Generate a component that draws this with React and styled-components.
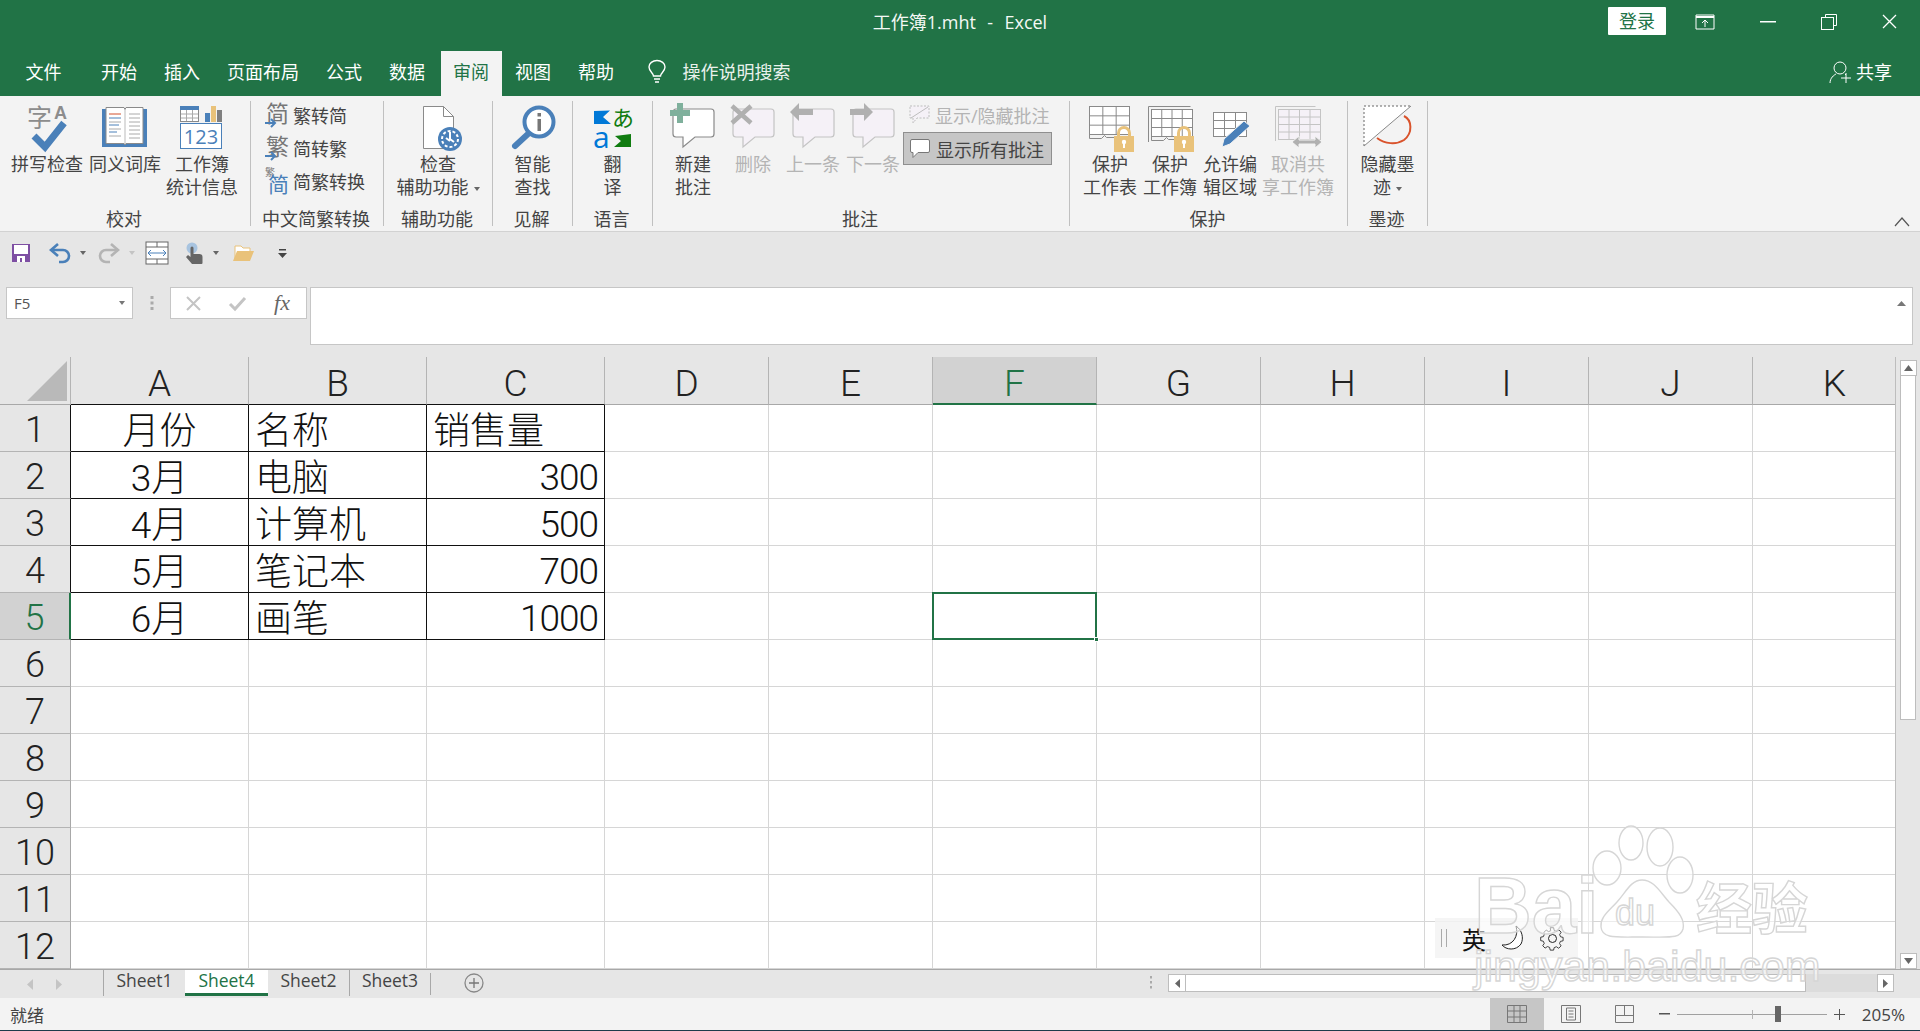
import React from 'react';
import styled, { createGlobalStyle } from 'styled-components';

const UI = '"Open Sans", "Noto Sans CJK SC", sans-serif';
const GREEN = '#217346';
const BLUE = '#4a80b9';

const Global = createGlobalStyle`
  html, body { margin: 0; height: 100%; overflow: hidden; background: #fff; }
  #root { height: 100%; }
  svg { display: block; flex: none; overflow: visible; }
`;

const Page = styled.div`
  position: relative;
  width: 1920px;
  height: 1031px;
  overflow: hidden;
  display: flex;
  flex-direction: column;
  font-family: ${UI};
  font-size: 18px;
  color: #444;
`;

/* title + tabs */
const TitleBar = styled.div`
  height: 51px;
  background: ${GREEN};
  display: grid;
  grid-template-columns: 1fr auto 1fr;
  color: #fff;
`;
const TitleText = styled.div`
  grid-column: 2;
  white-space: pre;
  line-height: 44px;
  font-size: 18px;
  word-spacing: 1px;
  color: #f4f8f5;
`;
const WinButtons = styled.div`
  display: flex;
  justify-content: flex-end;
  align-items: flex-start;
`;
const Login = styled.div`
  width: 58px;
  height: 28px;
  margin: 7px 10px 0 0;
  background: #fff;
  border-radius: 1px;
  color: ${GREEN};
  text-align: center;
  line-height: 28px;
`;
const WinBtn = styled.div`
  width: 61px;
  height: 43px;
  display: flex;
  align-items: center;
  justify-content: center;
`;
const TabRow = styled.div`
  height: 45px;
  background: ${GREEN};
  display: flex;
  color: #fff;
  line-height: 42px;
`;
const Tab = styled.div`
  padding: 0 13.5px;
  white-space: nowrap;
`;
const FileTab = styled(Tab)`
  padding: 0 26px 0 25.5px;
`;
const ActiveTab = styled(Tab)`
  margin-left: 2px;
  padding: 0 12.5px;
  background: #f3f3f3;
  color: ${GREEN};
  line-height: 42px;
`;
const Search = styled.div`
  display: flex;
  align-items: center;
  gap: 17px;
  margin-left: 20px;
  height: 42px;
  color: #e9f1ec;
`;
const Share = styled.div`
  margin-left: auto;
  margin-right: 28px;
  display: flex;
  align-items: center;
  gap: 4px;
  height: 42px;
`;

/* ribbon */
const Ribbon = styled.div`
  position: relative;
  height: 136px;
  box-sizing: border-box;
  padding-top: 5px;
  background: #f3f3f3;
  border-bottom: 1px solid #d2d2d2;
  display: flex;
`;
const Group = styled.section`
  width: ${p => p.$w}px;
  box-sizing: border-box;
  height: 125px;
  border-right: 1px solid #c0c0c0;
  display: flex;
  flex-direction: column;
`;
const GroupBody = styled.div`
  flex: 1;
  display: flex;
  justify-content: ${p => (p.$start ? 'flex-start' : 'center')};
  padding-left: ${p => p.$pad || 0}px;
`;
const GroupLabel = styled.div`
  height: 14px;
  line-height: 14px;
  padding-right: 2px;
  text-align: center;
  white-space: nowrap;
`;
const BigBtn = styled.div`
  width: ${p => p.$w || 60}px;
  flex: none;
  display: flex;
  flex-direction: column;
  align-items: center;
  color: ${p => (p.$off ? '#b4b4b4' : '#444')};
`;
const BigText = styled.div`
  line-height: 23px;
  text-align: center;
  white-space: nowrap;
  margin-top: 1px;
`;
const Caret = styled.span`
  display: inline-block;
  width: 0;
  height: 0;
  margin-left: ${p => p.$ml ?? 5}px;
  vertical-align: middle;
  border-left: 3.5px solid transparent;
  border-right: 3.5px solid transparent;
  border-top: 4px solid ${p => p.$c || '#666'};
`;
const SmallCol = styled.div`
  display: flex;
  flex-direction: column;
  padding-left: ${p => p.$pad || 0}px;
  margin-top: -3px;
  flex: none;
`;
const SmallRow = styled.div`
  height: 33px;
  display: flex;
  align-items: center;
  gap: 4px;
  padding-left: ${p => p.$pl || 0}px;
  white-space: nowrap;
  color: ${p => (p.$off ? '#b4b4b4' : '#444')};
`;
const ShowAll = styled(SmallRow)`
  width: 149px;
  box-sizing: border-box;
  padding-left: 5px;
  gap: 5px;
  margin-top: 1px;
  background: #c6c6c6;
  border: 1px solid #8f8f8f;
`;
const Collapse = styled.div`
  position: absolute;
  right: 10px;
  bottom: 4px;
`;

/* quick access */
const Qat = styled.div`
  height: 55px;
  background: #e6e6e6;
  box-sizing: border-box;
  padding: 9px 0 0 11px;
  display: flex;
  align-items: flex-start;
`;
const QatItem = styled.div`
  margin-left: ${p => p.$ml || 0}px;
  height: 24px;
  display: flex;
  align-items: center;
`;

/* formula bar */
const FormulaRow = styled.div`
  height: 70px;
  background: #e6e6e6;
  display: flex;
  align-items: flex-start;
  padding-left: 6px;
`;
const NameBox = styled.div`
  width: 127px;
  height: 32px;
  box-sizing: border-box;
  background: #fff;
  border: 1px solid #c6c6c6;
  display: flex;
  align-items: center;
  justify-content: space-between;
  padding: 0 7px 0 7px;
  font-size: 15px;
  color: #555;
`;
const Dots = styled.div`
  width: 37px;
  height: 32px;
  display: flex;
  align-items: center;
  justify-content: center;
`;
const FxBox = styled.div`
  width: 137px;
  height: 32px;
  box-sizing: border-box;
  background: #fff;
  border: 1px solid #c6c6c6;
  display: flex;
  align-items: center;
  justify-content: space-between;
  padding: 0 16px 0 15px;
`;
const FxGlyph = styled.span`
  font-family: "Liberation Serif", serif;
  font-style: italic;
  font-size: 22px;
  line-height: 26px;
  color: #666;
`;
const FormulaInput = styled.div`
  flex: 1;
  height: 58px;
  box-sizing: border-box;
  margin: 0 7px 0 3px;
  background: #fff;
  border: 1px solid #c6c6c6;
  display: flex;
  justify-content: flex-end;
  padding: 13px 6px 0 0;
`;

/* sheet */
const SheetArea = styled.div`
  height: 612px;
  display: flex;
  background: #e6e6e6;
`;
const Grid = styled.div`
  width: 1895px;
  flex: none;
  overflow: hidden;
  display: grid;
  grid-template-columns: 71px repeat(3, 178px) repeat(8, 164px);
  grid-template-rows: 48px repeat(12, 47px);
  background: #fff;
  font-family: Roboto, "Noto Sans CJK SC", sans-serif;
  font-weight: 300;
  font-size: 37px;
  color: #111;
`;
const Corner = styled.div`
  position: relative;
  background: #e6e6e6;
  border-right: 1px solid #b4b4b4;
  border-bottom: 1px solid #a8a8a8;
  box-sizing: border-box;
  &::after {
    content: '';
    position: absolute;
    right: 3px;
    bottom: 3px;
    width: 40px;
    height: 40px;
    background: #b9b9b9;
    clip-path: polygon(100% 0, 100% 100%, 0 100%);
  }
`;
const ColHead = styled.div`
  box-sizing: border-box;
  background: ${p => (p.$sel ? '#d2d2d2' : '#e6e6e6')};
  color: ${p => (p.$sel ? GREEN : '#222')};
  border-right: 1px solid #b4b4b4;
  border-bottom: ${p => (p.$sel ? `2px solid ${GREEN}` : p.$ruled ? '1px solid #111' : '1px solid #a8a8a8')};
  text-align: center;
  line-height: 54px;
`;
const RowHead = styled.div`
  box-sizing: border-box;
  background: ${p => (p.$sel ? '#d2d2d2' : '#e6e6e6')};
  color: ${p => (p.$sel ? GREEN : '#222')};
  border-right: ${p => (p.$sel ? `2px solid ${GREEN}` : p.$ruled ? '1px solid #111' : '1px solid #a8a8a8')};
  border-bottom: 1px solid #b4b4b4;
  text-align: center;
  font-size: 36px;
  line-height: 51px;
  overflow: hidden;
`;
const Cell = styled.div`
  position: relative;
  box-sizing: border-box;
  border-right: 1px solid ${p => (p.$ruled ? '#111' : '#d6d6d6')};
  border-bottom: 1px solid ${p => (p.$ruled ? '#111' : '#d6d6d6')};
  padding: 0 6px;
  text-align: ${p => p.$align || 'left'};
  line-height: ${p => (p.$num ? 51 : 53)}px;
  white-space: nowrap;
  letter-spacing: ${p => (p.$num ? '-1px' : 0)};
  ${p => p.$active && `
    &::after {
      content: '';
      position: absolute;
      left: -1px;
      top: -1px;
      right: -1px;
      bottom: -1px;
      border: 2px solid ${GREEN};
    }
    &::before {
      content: '';
      position: absolute;
      z-index: 1;
      right: -3px;
      bottom: -3px;
      width: 5px;
      height: 5px;
      background: ${GREEN};
      border: 1px solid #fff;
      box-sizing: border-box;
    }
  `}
`;
const VScroll = styled.div`
  width: 25px;
  box-sizing: border-box;
  padding: 3px 4px 0;
  border-left: 1px solid #bdbdbd;
  display: flex;
  flex-direction: column;
`;
const ScrollBtn = styled.div`
  box-sizing: border-box;
  width: ${p => p.$w || 17}px;
  height: ${p => p.$h || 16}px;
  flex: none;
  background: #fff;
  border: 1px solid #bdbdbd;
  display: flex;
  align-items: center;
  justify-content: center;
`;
const VThumb = styled.div`
  height: 344px;
  background: #fff;
  border: 1px solid #bdbdbd;
  border-top: 0;
  box-sizing: border-box;
`;
const Spring = styled.div`
  flex: 1;
`;

/* tabs + status */
const TabBar = styled.div`
  height: 29px;
  box-sizing: border-box;
  background: #e6e6e6;
  border-top: 1px solid #a8a8a8;
  display: flex;
  align-items: flex-start;
`;
const SheetNav = styled.div`
  width: 103px;
  height: 28px;
  display: flex;
  align-items: center;
  padding-left: 27px;
  gap: 23px;
  box-sizing: border-box;
`;
const SheetTab = styled.div`
  width: ${p => p.$w}px;
  height: 26px;
  box-sizing: border-box;
  text-align: center;
  font-size: 17.5px;
  line-height: 20px;
  background: ${p => (p.$on ? '#fff' : 'transparent')};
  color: ${p => (p.$on ? GREEN : '#444')};
  border-bottom: ${p => (p.$on ? `3px solid ${GREEN}` : '0')};
  border-left: ${p => (p.$sep ? '1px solid #a8a8a8' : '0')};
  background-clip: padding-box;
`;
const TabEnd = styled.div`
  width: 1px;
  height: 22px;
  margin-top: 3px;
  background: #a8a8a8;
`;
const AddSheet = styled.div`
  margin: 3px 0 0 33px;
`;
const HScroll = styled.div`
  margin-left: auto;
  margin-right: 26px;
  padding-top: 4px;
  display: flex;
  align-items: flex-start;
`;
const HThumb = styled.div`
  width: 620px;
  height: 18px;
  box-sizing: border-box;
  background: #fff;
  border: 1px solid #bdbdbd;
  border-left: 0;
`;
const HTrack = styled.div`
  width: 71px;
  height: 18px;
  background: #dcdcdc;
`;
const Splitter = styled.div`
  margin-right: 15px;
  height: 18px;
  display: flex;
  align-items: center;
`;
const StatusBar = styled.div`
  height: 33px;
  box-sizing: border-box;
  background: #f3f3f3;
  border-bottom: 1px solid #1d3c4a;
  display: flex;
  align-items: center;
  padding-left: 10px;
  font-size: 17px;
  color: #444;
`;
const ViewBtn = styled.div`
  width: 54px;
  height: 32px;
  display: flex;
  align-items: center;
  justify-content: center;
  background: ${p => (p.$on ? '#c6c6c6' : 'transparent')};
`;
const ViewGroup = styled.div`
  margin-left: auto;
  display: flex;
`;
const Zoom = styled.div`
  display: flex;
  align-items: center;
  margin-left: 7px;
  margin-right: 15px;
  gap: 7px;
`;
const Slider = styled.div`
  position: relative;
  width: 150px;
  height: 1px;
  background: #a0a0a0;
`;
const SliderTick = styled.div`
  position: absolute;
  left: 75px;
  top: -4px;
  width: 1px;
  height: 9px;
  background: #b4b4b4;
`;
const SliderThumb = styled.div`
  position: absolute;
  left: 98px;
  top: -8px;
  width: 6px;
  height: 16px;
  background: #666;
`;
const Percent = styled.div`
  margin-left: 10px;
`;

/* overlays */
const ImeBar = styled.div`
  position: absolute;
  left: 1435px;
  top: 918px;
  width: 143px;
  height: 40px;
  background: rgba(243, 243, 243, 0.85);
  display: flex;
  align-items: center;
  color: #111;
  font-size: 24px;
  padding-left: 6px;
  box-sizing: border-box;
`;
const ImeGrip = styled.div`
  width: 4px;
  height: 18px;
  border-left: 1px solid #aaa;
  border-right: 1px solid #aaa;
  margin-right: 15px;
`;
const ImeText = styled.span`
  margin-right: 15px;
  font-family: "Noto Sans CJK SC", sans-serif;
`;
const Watermark = styled.svg`
  position: absolute;
  left: 1470px;
  top: 825px;
  pointer-events: none;
`;

const Bubble = ({ fill = '#fff', stroke = '#8a8a8a' }) => (
  <path d="M13 8h35a3 3 0 0 1 3 3v22a3 3 0 0 1-3 3H32L20 46V36h-7a3 3 0 0 1-3-3V11a3 3 0 0 1 3-3z" fill={fill} stroke={stroke} strokeWidth="1.2" />
);

const SpellIcon = () => (
  <svg width="60" height="51">
    <text x="10" y="26" fontSize="25" fill="#8c8c8c" fontFamily='"Noto Sans CJK SC"'>字</text>
    <text x="37" y="18" fontSize="18" fontWeight="700" fill="#8c8c8c" fontFamily='"Liberation Sans"'>A</text>
    <path d="M17 35l11 11 19-24" fill="none" stroke={BLUE} strokeWidth="7" />
  </svg>
);
const BookIcon = () => (
  <svg width="60" height="51">
    <rect x="7" y="8" width="45" height="38" fill={BLUE} />
    <path d="M11 6.5h18l1 2 1-2h17v36H31l-1 1.5-1-1.5H11z" fill="#fff" stroke="#8a8a8a" />
    <path d="M30 9v34" stroke="#bbb" />
    <path d="M14 13h12" stroke="#d2502d" />
    <path d="M14 17h12M14 24h10M14 31h8" stroke={BLUE} />
    <path d="M14 21h12M14 28h12M14 35h12M34 13h11M34 17h11M34 21h11M34 25h11M34 29h11M34 33h11M34 37h11" stroke="#aaa" />
  </svg>
);
const StatsIcon = () => (
  <svg width="60" height="51">
    <rect x="8.5" y="5.5" width="18" height="15" fill="#fff" stroke="#8a8a8a" />
    <rect x="8" y="5" width="19" height="4" fill={BLUE} />
    <path d="M14.5 9v11M20.5 9v11M9 13h17M9 17h17" stroke="#aaa" />
    <rect x="33" y="12" width="5" height="9" fill={BLUE} />
    <rect x="39" y="5" width="5" height="16" fill="#e9c27a" />
    <rect x="45" y="9" width="5" height="12" fill="#7f7f7f" />
    <rect x="8.5" y="22.5" width="41" height="25" fill="#fff" stroke={BLUE} />
    <text x="29" y="43" fontSize="20" textAnchor="middle" fill={BLUE} fontFamily='"Open Sans"'>123</text>
  </svg>
);
const ConvertIcon = ({ glyph, small }) => (
  <svg width="24" height="28">
    {small && <text x="0" y="9" fontSize="10" fill="#777" fontFamily='"Noto Sans CJK SC"'>繁</text>}
    <text x={small ? 3 : 1} y={small ? 25 : 21} fontSize={small ? 21 : 23} fill={small ? BLUE : '#777'} fontFamily='"Noto Sans CJK SC"'>{glyph}</text>
    {!small && <path d="M0 22h9M6 18l4 4-4 4" fill="none" stroke={BLUE} strokeWidth="2" />}
  </svg>
);
const AccessIcon = () => (
  <svg width="60" height="51">
    <path d="M15.5 5.5h20l10 10v32h-30z" fill="#fff" stroke="#8a8a8a" />
    <path d="M35.5 5.5v10h10" fill="none" stroke="#8a8a8a" />
    <circle cx="42" cy="38" r="12" fill={BLUE} />
    <circle cx="42" cy="38" r="8" fill="none" stroke="#fff" strokeWidth="2" strokeDasharray="3 2" />
    <path d="M42 31v7l4 3M38 37l4 3" fill="none" stroke="#fff" strokeWidth="2" />
  </svg>
);
const LookupIcon = () => (
  <svg width="60" height="51">
    <circle cx="36" cy="21" r="14.5" fill="#fff" stroke={BLUE} strokeWidth="4" />
    <path d="M25 33L12 45" stroke={BLUE} strokeWidth="6" strokeLinecap="round" />
    <rect x="34.5" y="18" width="3.5" height="12" fill="#777" />
    <rect x="34.5" y="12" width="3.5" height="3.5" fill="#777" />
  </svg>
);
const TranslateIcon = () => (
  <svg width="60" height="51">
    <path d="M11 10l16-.5-7 6.500 8 7-9 0H11z" fill="#0078d7" />
    <text x="29" y="25" fontSize="22" fill="#107c10" fontFamily='"Noto Sans CJK SC"'>あ</text>
    <text x="10" y="47" fontSize="30" fill="#0078d7" fontFamily='"Open Sans"'>a</text>
    <path d="M48 33v13H31l7-6-6-5z" fill="#107c10" />
  </svg>
);
const NewCommentIcon = () => (
  <svg width="60" height="51">
    <Bubble />
    <path d="M14 2h6v7h7v6h-7v7h-6v-7H7V9h7z" fill="#7fb09c" />
  </svg>
);
const DeleteCommentIcon = () => (
  <svg width="60" height="51">
    <Bubble fill="#f5f1f7" stroke="#c4c4c4" />
    <path d="M9 5l19 17M28 5L9 22" stroke="#b0b0b0" strokeWidth="4.5" />
  </svg>
);
const PrevCommentIcon = () => (
  <svg width="60" height="51">
    <Bubble fill="#f5f1f7" stroke="#c4c4c4" />
    <path d="M16 2L7 11l9 9v-6h14V8H16z" fill="#b0b0b0" />
  </svg>
);
const NextCommentIcon = () => (
  <svg width="60" height="51">
    <Bubble fill="#f5f1f7" stroke="#c4c4c4" />
    <path d="M21 2l9 9-9 9v-6H7V8h14z" fill="#b0b0b0" />
  </svg>
);
const ToggleCommentIcon = () => (
  <svg width="24" height="22">
    <path d="M3 2h19v12H10l-4 5v-5H3z" fill="#f5f1f7" stroke="#bdbdbd" strokeDasharray="2 1.5" />
    <path d="M4 14L21 3" stroke="#bdbdbd" />
  </svg>
);
const ShowCommentIcon = () => (
  <svg width="22" height="21">
    <path d="M3 1.5h16a1.5 1.5 0 0 1 1.5 1.5v10a1.5 1.5 0 0 1-1.5 1.5H9l-5 5v-5H3a1.5 1.5 0 0 1-1.5-1.500V3A1.5 1.5 0 0 1 3 1.5z" fill="#fff" stroke="#777" />
  </svg>
);
const Lock = ({ x }) => (
  <g transform={`translate(${x} 26)`}>
    <path d="M4.5 9V6a5.5 5.5 0 0 1 11 0v3" fill="none" stroke="#e9c27a" strokeWidth="3" />
    <rect x="0" y="9" width="20" height="16" fill="#e9c27a" />
    <circle cx="10" cy="15" r="2.2" fill="#fff" />
    <rect x="9" y="15" width="2" height="6" fill="#fff" />
  </g>
);
const SheetLines = ({ x, y, w, h, stroke = '#8a8a8a', fill = '#fff', cols = 3, rows = 3 }) => {
  const verts = Array.from({ length: cols - 1 }, (_, i) => x + (w * (i + 1)) / cols);
  const hors = Array.from({ length: rows - 1 }, (_, i) => y + (h * (i + 1)) / rows);
  return (
    <g stroke={stroke} fill="none">
      <rect x={x} y={y} width={w} height={h} fill={fill} />
      {verts.map(v => <path key={v} d={`M${v} ${y}v${h}`} />)}
      {hors.map(v => <path key={v} d={`M${x} ${v}h${w}`} />)}
    </g>
  );
};
const ProtectSheetIcon = () => (
  <svg width="60" height="51">
    <SheetLines x={9.5} y={5.5} w={40} h={28} cols={3} rows={3} />
    <path d="M9.5 33.5v4h12l3-3 2 2h9" fill="none" stroke="#8a8a8a" />
    <Lock x={34} />
  </svg>
);
const ProtectBookIcon = () => (
  <svg width="60" height="51">
    <path d="M8.5 41V5.5h42" fill="none" stroke="#8a8a8a" />
    <SheetLines x={11.5} y={8.5} w={41} h={27} cols={4} rows={3} />
    <path d="M11.5 35.5v4h12l3-3 2 2h7" fill="none" stroke="#8a8a8a" />
    <Lock x={34} />
  </svg>
);
const AllowEditIcon = () => (
  <svg width="60" height="51">
    <SheetLines x={13.5} y={11.5} w={33} h={24} cols={3} rows={3} />
    <path d="M22 46l2-8 20-18 6 5-20 18z" fill={BLUE} stroke="#f3f3f3" />
  </svg>
);
const UnshareIcon = () => (
  <svg width="60" height="51">
    <path d="M7.500 40V5.5h40" fill="none" stroke="#c4c4c4" />
    <SheetLines x={10.5} y={8.5} w={42} h={30} cols={4} rows={4} stroke="#c4c4c4" fill="#f5f1f7" />
    <path d="M24 41l7-6v4h16v-4l7 6-7 6v-4H31v4z" fill="#b0b0b0" stroke="#f3f3f3" />
  </svg>
);
const InkIcon = () => (
  <svg width="60" height="51">
    <path d="M6 5h47L6 45z" fill="#fff" />
    <path d="M6 45V5h47" fill="none" stroke="#666" strokeDasharray="2 2" />
    <path d="M6 45L53 5" stroke="#888" />
    <path d="M46 15c8 4 9 17 0 24-8 5-19 4-27 -2" fill="none" stroke="#d9532c" strokeWidth="2" />
  </svg>
);

const SaveIcon = () => (
  <svg width="20" height="20">
    <path d="M1 1h18v18H1z" fill="#7e4fa3" />
    <rect x="3" y="2" width="14" height="9" fill="#fff" />
    <rect x="6" y="13" width="8" height="6" fill="#fff" />
    <rect x="9" y="15" width="2" height="4" fill="#7e4fa3" />
  </svg>
);
const UndoIcon = ({ flip, color }) => (
  <svg width="22" height="20" style={flip ? { transform: 'scaleX(-1)' } : undefined}>
    <path d="M3 7h11a6 6 0 0 1 0 12h-4" fill="none" stroke={color} strokeWidth="2.6" />
    <path d="M9 1L2 7l7 6" fill="none" stroke={color} strokeWidth="2.6" />
  </svg>
);
const FitIcon = () => (
  <svg width="24" height="24">
    <rect x="1" y="1" width="22" height="22" fill="#fff" stroke="#666" />
    <path d="M1 6h22M1 18h22M12 1v5M12 18v5" stroke="#666" />
    <path d="M3 12h18" stroke={BLUE} />
    <path d="M6 9l-3 3 3 3M18 9l3 3-3 3" fill="none" stroke={BLUE} />
  </svg>
);
const TouchIcon = () => (
  <svg width="18" height="22">
    <circle cx="7" cy="6" r="5.5" fill="#a8c4e0" />
    <path d="M5.500 6a1.500 1.500 0 0 1 3 0v6h6a3 3 0 0 1 3 3v6a1 1 0 0 1-1 1H7l-6-7 2-2 2.500 2z" fill="#666" />
  </svg>
);
const FolderIcon = () => (
  <svg width="23" height="18">
    <path d="M3 16L3 2h6l2 2h7v3" fill="#fff" stroke="#e9c27a" />
    <path d="M1 17l4-10h17l-4 10z" fill="#e9c27a" />
  </svg>
);
const CustomizeIcon = () => (
  <svg width="9" height="9">
    <rect x="1" y="0" width="7" height="1.5" fill="#444" />
    <path d="M0 4h9L4.5 9z" fill="#444" />
  </svg>
);

const tabs = ['开始', '插入', '页面布局', '公式', '数据'];
const tabsAfter = ['视图', '帮助'];
const columns = ['A', 'B', 'C', 'D', 'E', 'F', 'G', 'H', 'I', 'J', 'K'];
const tableRows = [
  ['月份', '名称', '销售量'],
  ['3月', '电脑', '300'],
  ['4月', '计算机', '500'],
  ['5月', '笔记本', '700'],
  ['6月', '画笔', '1000'],
];

function SheetGrid() {
  const rows = Array.from({ length: 12 }, (_, i) => i);
  return (
    <Grid>
      <Corner />
      {columns.map((c, i) => <ColHead key={c} $ruled={i < 3} $sel={c === 'F'}>{c}</ColHead>)}
      {rows.map(r => (
        <React.Fragment key={r}>
          <RowHead $ruled={r < 5} $sel={r === 4}>{r + 1}</RowHead>
          {columns.map((c, i) => {
            const row = tableRows[r];
            const value = row && i < 3 ? row[i] : '';
            const isNum = i === 2 && r > 0;
            return (
              <Cell
                key={c}
                $ruled={row && i < 3}
                $align={i === 0 ? 'center' : isNum ? 'right' : 'left'}
                $num={isNum}
                $active={r === 4 && c === 'F'}
              >
                {value}
              </Cell>
            );
          })}
        </React.Fragment>
      ))}
    </Grid>
  );
}

export default function App() {
  return (
    <Page>
      <Global />
      <TitleBar>
        <TitleText>工作簿1.mht  -  Excel</TitleText>
        <WinButtons>
          <Login>登录</Login>
          <WinBtn>
            <svg width="20" height="16" style={{ marginRight: 3 }}><path d="M1 1h18v14H1z" fill="none" stroke="#fff" /><path d="M1 3h18" stroke="#fff" strokeWidth="2" /><path d="M10 13V6M7 9l3-3 3 3" fill="none" stroke="#fff" /></svg>
          </WinBtn>
          <WinBtn><svg width="16" height="2"><rect width="16" height="1.5" fill="#fff" /></svg></WinBtn>
          <WinBtn>
            <svg width="16" height="16"><path d="M4.5 3.5V.5h11v11h-3" fill="none" stroke="#fff" /><rect x="0.5" y="3.5" width="12" height="12" fill="none" stroke="#fff" /></svg>
          </WinBtn>
          <WinBtn><svg width="15" height="15"><path d="M1 1l13 13M14 1L1 14" stroke="#fff" strokeWidth="1.3" /></svg></WinBtn>
        </WinButtons>
      </TitleBar>

      <TabRow>
        <FileTab>文件</FileTab>
        {tabs.map(t => <Tab key={t}>{t}</Tab>)}
        <ActiveTab>审阅</ActiveTab>
        {tabsAfter.map(t => <Tab key={t}>{t}</Tab>)}
        <Search>
          <svg width="18" height="24"><path d="M5.5 16c0-3-4.5-4.500-4.500-9a8 6.500 0 0 1 16 0c0 4.500-4.500 6-4.500 9z" fill="none" stroke="#fff" strokeWidth="1.4" /><path d="M6 19h6M7 22h4" stroke="#fff" strokeWidth="1.4" /></svg>
          操作说明搜索
        </Search>
        <Share>
          <svg width="23" height="24"><circle cx="11" cy="8" r="6" fill="none" stroke="#fff" /><path d="M1 23c0-5 4-8 6-9M16 14l1 1" fill="none" stroke="#fff" /><path d="M12 18h10M17 13v10" stroke="#fff" /></svg>
          共享
        </Share>
      </TabRow>

      <Ribbon>
        <Group $w={251}>
          <GroupBody $start $pad={8}>
            <BigBtn $w={78}><SpellIcon /><BigText>拼写检查</BigText></BigBtn>
            <BigBtn $w={78}><BookIcon /><BigText>同义词库</BigText></BigBtn>
            <BigBtn $w={76}><StatsIcon /><BigText>工作簿<br />统计信息</BigText></BigBtn>
          </GroupBody>
          <GroupLabel>校对</GroupLabel>
        </Group>
        <Group $w={133}>
          <GroupBody $start>
            <SmallCol $pad={14}>
              <SmallRow><ConvertIcon glyph="简" />繁转简</SmallRow>
              <SmallRow><ConvertIcon glyph="繁" />简转繁</SmallRow>
              <SmallRow><ConvertIcon glyph="简" small />简繁转换</SmallRow>
            </SmallCol>
          </GroupBody>
          <GroupLabel>中文简繁转换</GroupLabel>
        </Group>
        <Group $w={109}>
          <GroupBody>
            <BigBtn $w={100}><AccessIcon /><BigText>检查<br />辅助功能<Caret /></BigText></BigBtn>
          </GroupBody>
          <GroupLabel>辅助功能</GroupLabel>
        </Group>
        <Group $w={80}>
          <GroupBody>
            <BigBtn><LookupIcon /><BigText>智能<br />查找</BigText></BigBtn>
          </GroupBody>
          <GroupLabel>见解</GroupLabel>
        </Group>
        <Group $w={80}>
          <GroupBody>
            <BigBtn><TranslateIcon /><BigText>翻<br />译</BigText></BigBtn>
          </GroupBody>
          <GroupLabel>语言</GroupLabel>
        </Group>
        <Group $w={417}>
          <GroupBody $start $pad={10}>
            <BigBtn><NewCommentIcon /><BigText>新建<br />批注</BigText></BigBtn>
            <BigBtn $off><DeleteCommentIcon /><BigText>删除</BigText></BigBtn>
            <BigBtn $off><PrevCommentIcon /><BigText>上一条</BigText></BigBtn>
            <BigBtn $off><NextCommentIcon /><BigText>下一条</BigText></BigBtn>
            <SmallCol>
              <SmallRow $off $pl={4}><ToggleCommentIcon />显示/隐藏批注</SmallRow>
              <ShowAll><ShowCommentIcon />显示所有批注</ShowAll>
            </SmallCol>
          </GroupBody>
          <GroupLabel>批注</GroupLabel>
        </Group>
        <Group $w={278}>
          <GroupBody $start $pad={10}>
            <BigBtn><ProtectSheetIcon /><BigText>保护<br />工作表</BigText></BigBtn>
            <BigBtn><ProtectBookIcon /><BigText>保护<br />工作簿</BigText></BigBtn>
            <BigBtn><AllowEditIcon /><BigText>允许编<br />辑区域</BigText></BigBtn>
            <BigBtn $w={76} $off><UnshareIcon /><BigText>取消共<br />享工作簿</BigText></BigBtn>
          </GroupBody>
          <GroupLabel>保护</GroupLabel>
        </Group>
        <Group $w={80}>
          <GroupBody>
            <BigBtn><InkIcon /><BigText>隐藏墨<br />迹<Caret /></BigText></BigBtn>
          </GroupBody>
          <GroupLabel>墨迹</GroupLabel>
        </Group>
        <Collapse>
          <svg width="16" height="10"><path d="M1 9l7-8 7 8" fill="none" stroke="#555" strokeWidth="1.2" /></svg>
        </Collapse>
      </Ribbon>

      <Qat>
        <QatItem><SaveIcon /></QatItem>
        <QatItem $ml={18}><UndoIcon color={BLUE} flip={false} /></QatItem>
        <QatItem $ml={9}><Caret $ml={0} /></QatItem>
        <QatItem $ml={12}><UndoIcon color="#b4b4b4" flip /></QatItem>
        <QatItem $ml={9}><Caret $ml={0} $c="#c4c4c4" /></QatItem>
        <QatItem $ml={10}><FitIcon /></QatItem>
        <QatItem $ml={16}><TouchIcon /></QatItem>
        <QatItem $ml={10}><Caret $ml={0} /></QatItem>
        <QatItem $ml={13}><FolderIcon /></QatItem>
        <QatItem $ml={23}><CustomizeIcon /></QatItem>
      </Qat>

      <FormulaRow>
        <NameBox>F5<Caret $ml={0} $c="#777" /></NameBox>
        <Dots>
          <svg width="4" height="14"><path d="M2 0v14" stroke="#aaa" strokeWidth="3" strokeDasharray="3 2.500" /></svg>
        </Dots>
        <FxBox>
          <svg width="15" height="15"><path d="M1 1l13 13M14 1L1 14" stroke="#c4c4c4" strokeWidth="2" /></svg>
          <svg width="17" height="15"><path d="M1 8l5 5L16 2" fill="none" stroke="#c4c4c4" strokeWidth="3" /></svg>
          <FxGlyph>fx</FxGlyph>
        </FxBox>
        <FormulaInput>
          <svg width="9" height="6"><path d="M0 5l4.500-5L9 5z" fill="#777" /></svg>
        </FormulaInput>
      </FormulaRow>

      <SheetArea>
        <SheetGrid />
        <VScroll>
          <ScrollBtn><svg width="9" height="6"><path d="M0 6l4.500-6L9 6z" fill="#666" /></svg></ScrollBtn>
          <VThumb />
          <Spring />
          <ScrollBtn><svg width="9" height="6"><path d="M0 0l4.500 6L9 0z" fill="#666" /></svg></ScrollBtn>
        </VScroll>
      </SheetArea>

      <TabBar>
        <SheetNav>
          <svg width="6" height="11"><path d="M6 0v11L0 5.500z" fill="#c4c4c4" /></svg>
          <svg width="6" height="11"><path d="M0 0v11l6-5.500z" fill="#c4c4c4" /></svg>
        </SheetNav>
        <SheetTab $sep $w={82}>Sheet1</SheetTab>
        <SheetTab $on $w={83}>Sheet4</SheetTab>
        <SheetTab $w={81}>Sheet2</SheetTab>
        <SheetTab $sep $w={81}>Sheet3</SheetTab>
        <TabEnd />
        <AddSheet>
          <svg width="20" height="20"><circle cx="10" cy="10" r="9" fill="none" stroke="#888" strokeWidth="1.3" /><path d="M10 5v10M5 10h10" stroke="#777" strokeWidth="1.3" /></svg>
        </AddSheet>
        <HScroll>
          <Splitter><svg width="4" height="14"><path d="M2 0v14" stroke="#aaa" strokeWidth="2" strokeDasharray="2.500 2.500" /></svg></Splitter>
          <ScrollBtn $w={18} $h={18}><svg width="5" height="9"><path d="M5 0v9L0 4.500z" fill="#666" /></svg></ScrollBtn>
          <HThumb />
          <HTrack />
          <ScrollBtn $w={17} $h={18}><svg width="5" height="9"><path d="M0 0v9l5-4.500z" fill="#666" /></svg></ScrollBtn>
        </HScroll>
      </TabBar>

      <StatusBar>
        就绪
        <ViewGroup>
          <ViewBtn $on>
            <svg width="20" height="18"><path d="M.5.5h19v17H.5zM7 .5v17M13 .5v17M.5 6h19M.5 12h19" fill="none" stroke="#777" /></svg>
          </ViewBtn>
          <ViewBtn>
            <svg width="20" height="18"><path d="M.5.5h19v17H.5z" fill="none" stroke="#777" /><path d="M5.500 3h9v12h-9zM7.500 6h5M7.500 9h5M7.500 12h5" fill="none" stroke="#777" /></svg>
          </ViewBtn>
          <ViewBtn>
            <svg width="19" height="18"><path d="M.5 10.500V.5h18v17H.5v-7h18M9.500.5v10" fill="none" stroke="#777" /></svg>
          </ViewBtn>
        </ViewGroup>
        <Zoom>
          <svg width="11" height="2"><rect width="11" height="1.5" fill="#555" /></svg>
          <Slider><SliderTick /><SliderThumb /></Slider>
          <svg width="11" height="11"><path d="M0 5.500h11M5.500 0v11" stroke="#555" /></svg>
          <Percent>205%</Percent>
        </Zoom>
      </StatusBar>

      <ImeBar>
        <ImeGrip />
        <ImeText>英</ImeText>
        <svg width="24" height="26" style={{ marginRight: 15 }}><path d="M15 1c3 10-3 20-14 19 4 5 14 6 19-1 3-6 1-14-5-18z" fill="#fff" stroke="#222" /></svg>
        <svg width="25" height="25" viewBox="0 0 25 25" fill="none" stroke="#222">
          <circle cx="12.500" cy="12.500" r="4" />
          <path d="M10.500 1.500h4l.7 3.200 2.600 1.100 2.800-1.800 2.800 2.800-1.800 2.800 1.100 2.600 3 .7v4l-3.200.7-1 2.500 1.800 2.800-2.800 2.800-2.700-1.800-2.600 1-.7 3h-4l-.7-3.200-2.500-1-2.800 1.800-2.800-2.800 1.800-2.700-1.100-2.600-3.100-.7v-4l3.200-.7 1-2.500L3 7.100l2.800-2.800 2.800 1.800 2.500-1z" transform="scale(.85) translate(1.500 0.500)" />
        </svg>
      </ImeBar>

      <Watermark width="360" height="170" fill="rgba(255,255,255,0.55)" stroke="#d6d6d6" strokeWidth="1.4">
        <text x="4" y="108" fontSize="80" fontWeight="700" fontFamily='"Liberation Sans"'>Bai</text>
        <ellipse cx="161" cy="18" rx="12" ry="17" />
        <ellipse cx="190" cy="22" rx="13" ry="19" />
        <ellipse cx="137" cy="43" rx="14" ry="17" />
        <ellipse cx="210" cy="50" rx="13" ry="18" />
        <path d="M172 55c12 0 18 12 27 22 10 10 16 18 14 27-3 10-12 8-41 8-26 0-40 2-41-10-1-10 8-16 16-25 9-10 14-22 25-22z" />
        <text x="145" y="100" fontSize="36" fontFamily='"Liberation Sans"'>du</text>
        <text x="226" y="104" fontSize="56" fontWeight="700" fontFamily='"Noto Sans CJK SC"'>经验</text>
        <text x="4" y="156" fontSize="43" fontFamily='"Liberation Sans"'>jingyan.baidu.com</text>
      </Watermark>
    </Page>
  );
}
